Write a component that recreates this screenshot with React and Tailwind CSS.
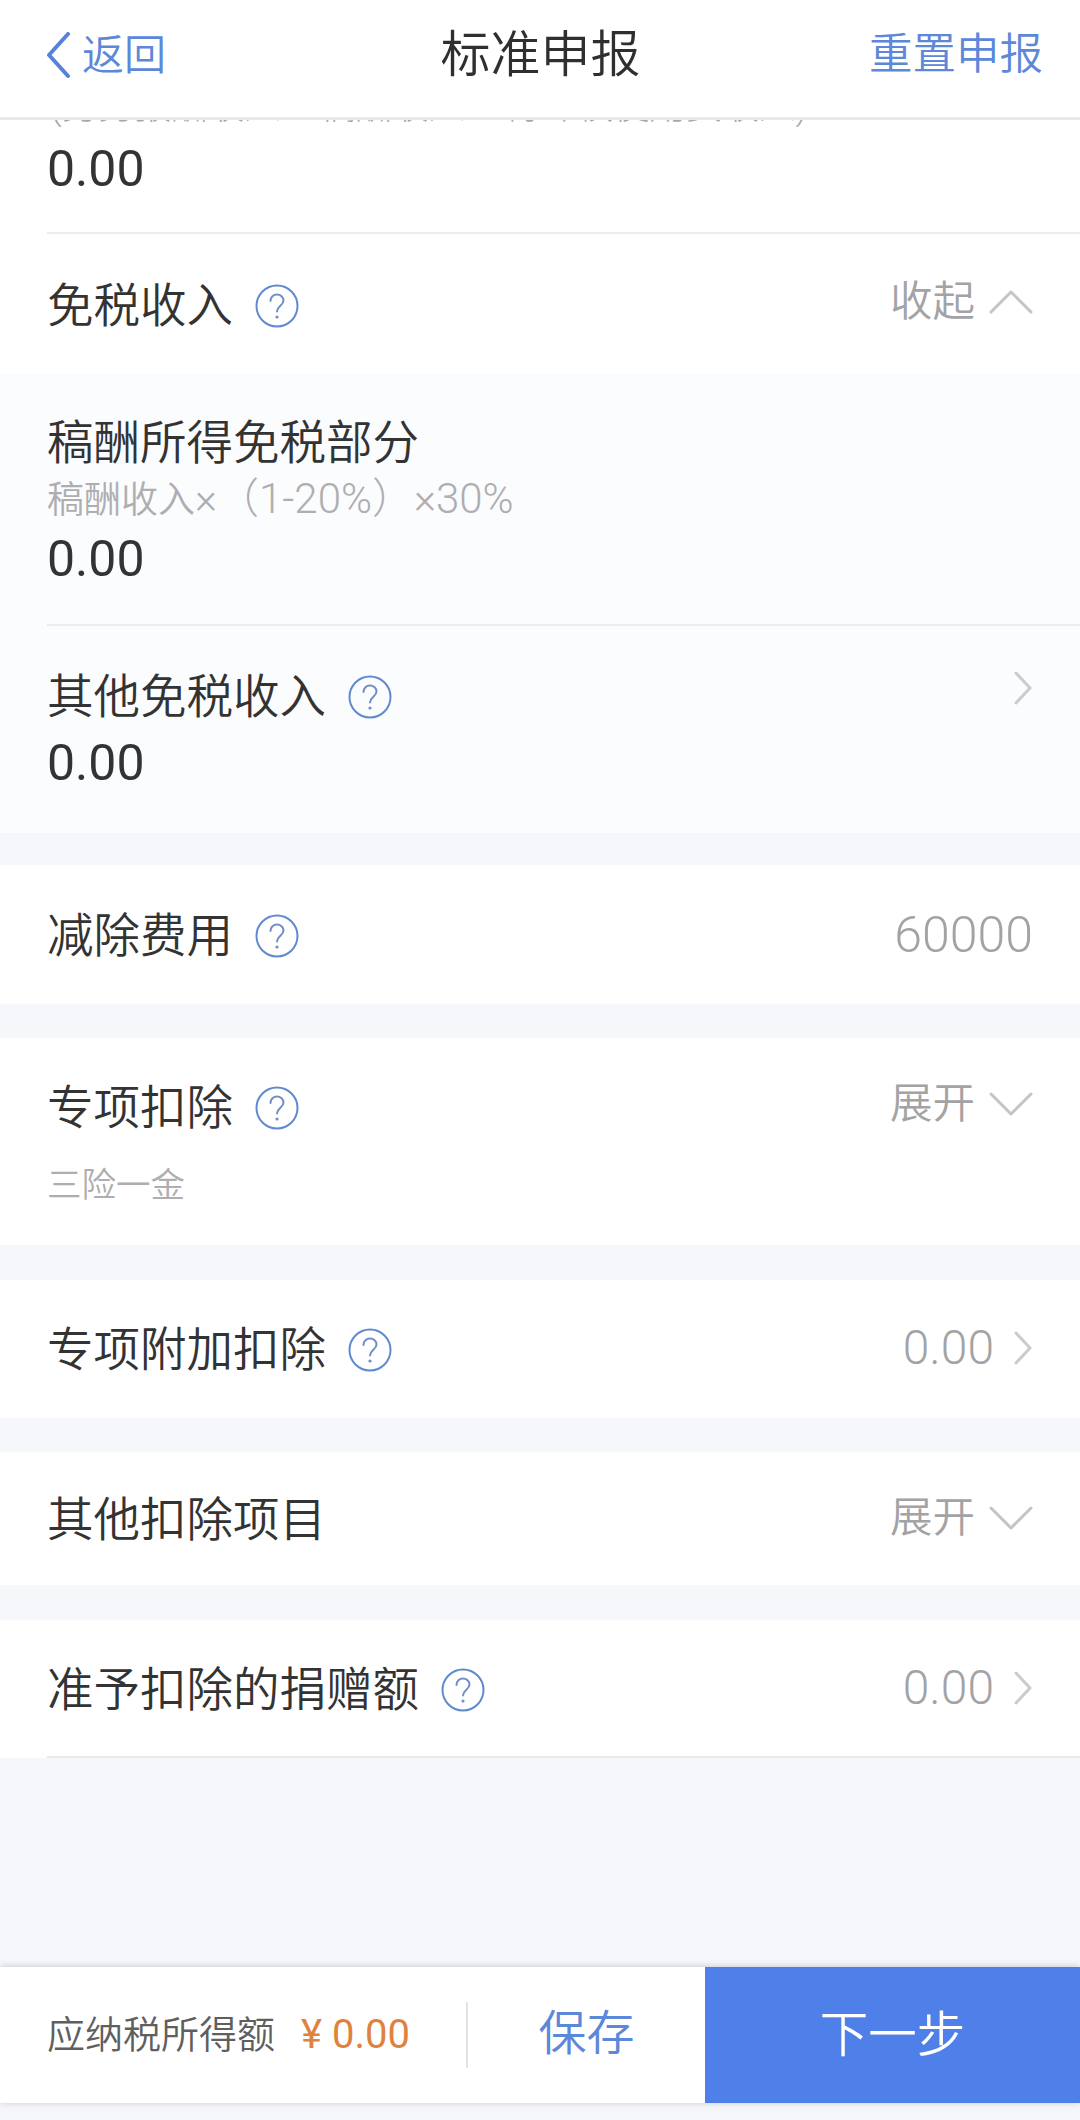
import React from "react";

function Help() {
  return (
    <svg viewBox="0 0 44 44" className="w-[44px] h-[44px] shrink-0 ml-[22px]" fill="none">
      <circle cx="22" cy="22" r="20.500" stroke="#5f8ad0" strokeWidth="2" />
      <path d="M15.500 17c0-4 3-6.500 6.500-6.500s6.500 2.500 6.500 6c0 5-6.500 5.500-6.500 11" stroke="#6f8fc4" strokeWidth="2" strokeLinecap="round" />
      <circle cx="22" cy="33" r="1.600" fill="#6f8fc4" />
    </svg>
  );
}

function ChevronRight() {
  return (
    <svg viewBox="0 0 20 34" className="w-[20px] h-[34px] ml-[19px]" fill="none">
      <path d="M3 2l14 15L3 32" stroke="#cbcbce" strokeWidth="3" strokeLinecap="round" strokeLinejoin="round" />
    </svg>
  );
}

function ChevronV({ up }) {
  return (
    <svg viewBox="0 0 44 24" className="w-[44px] h-[24px] ml-[14px]" fill="none">
      <path d={up ? "M2 22L22 2l20 20" : "M2 2l20 20L42 2"} stroke="#c4c4c6" strokeWidth="3" strokeLinecap="round" strokeLinejoin="round" />
    </svg>
  );
}

function Section({ className, children }) {
  return <div className={"bg-white px-[47px] flex items-center justify-between " + className}>{children}</div>;
}

function Label({ children, help }) {
  return (
    <div className="flex items-center text-[46.500px] leading-[60px] text-[#333333] font-[350] whitespace-nowrap">
      {children}
      {help && <Help />}
    </div>
  );
}

function Value({ children, className = "-mt-[4px]" }) {
  return <div className={"flex items-center text-[42.500px] text-[#a3a3a5] font-[350] " + className}>{children}</div>;
}

function Num({ className, children }) {
  return <div className={"text-[50px] leading-[60px] text-[#333333] font-normal " + className}>{children}</div>;
}

export default function App() {
  return (
    <div className="w-[1080px] h-[2120px] bg-[#f6f7fa] flex flex-col overflow-hidden font-['Roboto','Noto_Sans_CJK_SC',sans-serif]">
      <header className="h-[120px] shrink-0 bg-white border-b-[3px] border-[#e9e9ea] px-[45px] pb-[7px] flex items-center justify-between">
        <div className="w-[200px] flex items-center text-[#5d87d8] text-[42px] font-[350]">
          <svg viewBox="0 0 26 46" className="w-[26px] h-[46px] mr-[11px]" fill="none">
            <path d="M23 2L4 23l19 21" stroke="#5682dc" strokeWidth="4" strokeLinecap="round" strokeLinejoin="round" />
          </svg>
          返回
        </div>
        <div className="text-[50px] text-[#2f2f2f] font-[350] mr-[7px]">标准申报</div>
        <div className="w-[200px] text-right text-[#5d87d8] text-[43.500px] font-[350] whitespace-nowrap mr-[-8px]">重置申报</div>
      </header>

      <div className="bg-white h-[254px] shrink-0 flex flex-col">
        <div className="h-[7px] overflow-hidden flex items-end pl-[50px]">
          <div className="text-[36.500px] leading-[40px] text-[#a8a8a8] whitespace-nowrap shrink-0 font-light">
            (劳务报酬收入 + 稿酬收入 + 特许权使用费收入)
          </div>
        </div>
        <div className="ml-[47px] h-[107px] border-b-2 border-[#ededee] pt-[12px]">
          <Num>0.00</Num>
        </div>
        <div className="flex-1 px-[47px] pt-[3px] flex items-center justify-between">
          <Label help>免税收入</Label>
          <Value className="-mt-[8px]">
            收起
            <ChevronV up />
          </Value>
        </div>
      </div>

      <div className="bg-[#fbfcfe] h-[459px] shrink-0 flex flex-col">
        <div className="ml-[47px] h-[252px] border-b-2 border-[#ededee] flex flex-col pt-[39px]">
          <Label>稿酬所得免税部分</Label>
          <div className="text-[37px] leading-[40px] text-[#aeaeb0] font-[350] mt-[6px]">
            稿酬收入<span className="text-[42px] font-light">×（1-20%）×30%</span>
          </div>
          <Num className="mt-[8px]">0.00</Num>
        </div>
        <div className="px-[47px] flex justify-between items-start pt-[41px]">
          <div>
            <Label help>其他免税收入</Label>
            <Num className="mt-[6px]">0.00</Num>
          </div>
          <div className="mt-[4px]">
            <ChevronRight />
          </div>
        </div>
      </div>

      <Section className="h-[139px] mt-[32px] pt-[3px] shrink-0">
        <Label help>减除费用</Label>
        <Value className="-mt-[2px]">
          <span className="text-[50px]">60000</span>
        </Value>
      </Section>

      <div className="bg-white h-[207px] mt-[34px] shrink-0 px-[47px] flex flex-col">
        <div className="flex items-center justify-between pt-[40px]">
          <Label help>专项扣除</Label>
          <Value className="-mt-[8px]">
            展开
            <ChevronV />
          </Value>
        </div>
        <div className="text-[34.500px] leading-[40px] text-[#aeaeb0] font-[350] mt-[27px]">三险一金</div>
      </div>

      <Section className="h-[138px] mt-[35px] pt-[1px] shrink-0">
        <Label help>专项附加扣除</Label>
        <Value>
          <span className="text-[48px]">0.00</span>
          <ChevronRight />
        </Value>
      </Section>

      <Section className="h-[133px] mt-[34px] pt-[3px] shrink-0">
        <Label>其他扣除项目</Label>
        <Value className="-mt-[4px]">
          展开
          <ChevronV />
        </Value>
      </Section>

      <div className="bg-white h-[138px] mt-[35px] shrink-0 pl-[47px]">
        <div className="h-full border-b-2 border-[#e8e8ea] pr-[47px] pt-[3px] flex items-center justify-between">
          <Label help>准予扣除的捐赠额</Label>
          <Value>
            <span className="text-[48px]">0.00</span>
            <ChevronRight />
          </Value>
        </div>
      </div>

      <div className="mt-[209px] h-[136px] shrink-0 bg-white flex shadow-[0_-2px_6px_rgba(0,0,0,0.12),0_2px_6px_rgba(0,0,0,0.08)]">
        <div className="flex-1 flex items-center pl-[47px]">
          <div className="w-[419px] flex items-center whitespace-nowrap">
            <div className="text-[38px] text-[#5f5f5f] font-[350]">应纳税所得额</div>
            <div className="text-[40px] text-[#e0823f] font-normal ml-[26px]">¥ 0.00</div>
          </div>
          <div className="h-[66px] border-l-2 border-[#e3e3e5]" />
          <div className="flex-1 text-center text-[48px] text-[#5d87d8] font-[350] -mt-[2px]">保存</div>
        </div>
        <div className="w-[375px] bg-[#4f7fe8] flex items-center justify-center text-[48.500px] text-white font-[350] pt-[3px]">下一步</div>
      </div>
    </div>
  );
}
